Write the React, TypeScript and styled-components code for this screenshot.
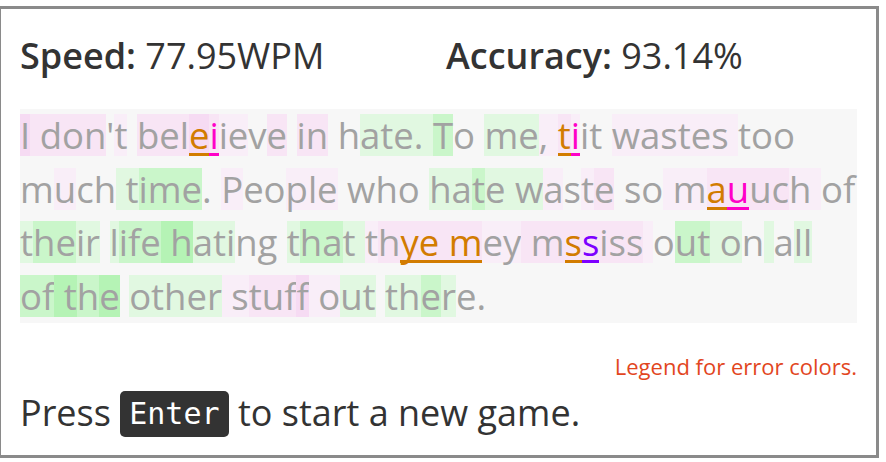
import React from "react";
import styled, { createGlobalStyle } from "styled-components";

const Global = createGlobalStyle`
  html, body { margin: 0; padding: 0; background: #ffffff; }
  body { font-family: "Open Sans", "Noto Sans", sans-serif; overflow: hidden; }
`;

const Frame = styled.div`
  box-sizing: border-box;
  width: 881px;
  height: 452px;
  margin: 6px 0 0 -2px;
  border: 3px solid #8a8a8a;
  padding: 0 19px 0 19px;
  display: flex;
  flex-direction: column;
`;

const Stats = styled.div`
  display: grid;
  grid-template-columns: 426px 1fr;
  height: 100px;
  box-sizing: border-box;
  padding-top: 23px;
  align-items: start;
  font-size: 36px;
  line-height: 48px;
  color: #333333;
`;

const Stat = styled.div`
  white-space: nowrap;
  b { font-weight: 600; }
`;

const Passage = styled.div`
  background: #f7f7f7;
  font-size: 36.5px;
  color: #a2a2a2;
`;

const Line = styled.div`
  line-height: 53.5px;
  height: 53.5px;
  white-space: pre;
`;

type Tone = "" | "a" | "b" | "c" | "g" | "h" | "j";
type Err = "" | "o" | "m" | "p";

const toneColor: Record<string, string> = {
  "": "transparent",
  a: "#f9eef8",
  b: "#f8e5f5",
  c: "#f6dbf3",
  g: "#e1f8e1",
  h: "#caf6ca",
  j: "#b5f3b5",
};

const errColor: Record<string, string> = {
  o: "#d27c00",
  m: "#ff00c8",
  p: "#7d00ff",
};

const Ch = styled.span<{ $tone: Tone; $err: Err }>`
  display: inline-block;
  line-height: 42px;
  height: 42px;
  background: ${(p) => toneColor[p.$tone]};
  color: ${(p) => (p.$err ? errColor[p.$err] : "inherit")};
  box-shadow: ${(p) => (p.$err ? `inset 0 -3px 0 ${errColor[p.$err]}` : "none")};
`;

type Seg = [string, Tone, Err?];

const lines: Seg[][] = [
  [
    ["I", "c"], [" don", "b"], ["'", ""], ["t", "a"], [" ", ""], ["bel", "b"],
    ["e", "c", "o"], ["i", "b", "m"], ["ie", "a"], ["v", ""], ["e", "b"], [" ", ""],
    ["in", "b"], [" h", ""], ["ate. ", "g"], ["T", "h"], ["o ", ""], ["me", "g"],
    [",", "a"], [" ", "a"], ["t", "b", "o"], ["i", "a", "m"], ["it ", ""],
    ["wastes ", "a"], ["too", ""],
  ],
  [
    ["m", ""], ["u", "a"], ["ch", ""], [" t", "g"], ["ime", "h"], [". ", ""],
    ["P", "a"], ["eo", ""], ["ple", "a"], [" who ", ""], ["h", "g"], ["a", "g"],
    ["t", "h"], ["e w", "g"], ["a", "a"], ["s", ""], ["t", "a"], ["e", "b"],
    [" so", ""], [" m", "a"], ["a", "b", "o"], ["u", "b", "m"], ["uc", "b"],
    ["h ", "a"], ["of", ""],
  ],
  [
    ["t", "g"], ["he", "h"], ["ir", "g"], [" ", ""], ["l", "g"], ["ife", "h"],
    [" h", "j"], ["ati", "g"], ["ng ", ""], ["t", "g"], ["ha", "h"], ["t ", "g"],
    ["t", "a"], ["h", "b"], ["ye m", "b", "o"], ["ey", "a"], [" m", "b"],
    ["s", "b", "o"], ["s", "b", "p"], ["iss", "b"], [" ", "a"], ["o", ""],
    ["ut", "h"], [" o", "g"], ["n", ""], [" ", "g"], ["a", ""], ["ll", "g"],
  ],
  [
    ["of", "h"], [" t", "j"], ["h", "h"], ["e", "j"], [" ", ""], ["other", "g"],
    [" s", "a"], ["tuf", "b"], ["f", "c"], [" o", "a"], ["ut", "g"], [" ", ""],
    ["th", "g"], ["e", "h"], ["r", "g"], ["e.", ""],
  ],
];

const Legend = styled.div`
  margin-top: 28px;
  text-align: right;
  font-size: 22px;
  color: #e2461e;
  line-height: 30px;
`;

const Prompt = styled.div`
  margin-top: 8px;
  font-size: 36px;
  color: #333333;
  line-height: 48px;
  white-space: nowrap;
`;

const Key = styled.kbd`
  display: inline-block;
  font-family: "DejaVu Sans Mono", "Liberation Mono", monospace;
  font-size: 30px;
  line-height: 46px;
  height: 46px;
  padding: 0 9px;
  background: #333333;
  color: #ffffff;
  border-radius: 5px;
  vertical-align: 2px;
`;

export default function App() {
  return (
    <>
      <Global />
      <Frame>
        <Stats>
          <Stat><b>Speed:</b> 77.95WPM</Stat>
          <Stat><b>Accuracy:</b> 93.14%</Stat>
        </Stats>
        <Passage>
          {lines.map((segs, i) => (
            <Line key={i}>
              {segs.map(([t, tone, err], j) => (
                <Ch key={j} $tone={tone} $err={err ?? ""}>{t}</Ch>
              ))}
            </Line>
          ))}
        </Passage>
        <Legend>Legend for error colors.</Legend>
        <Prompt>
          Press <Key>Enter</Key> to start a new game.
        </Prompt>
      </Frame>
    </>
  );
}
